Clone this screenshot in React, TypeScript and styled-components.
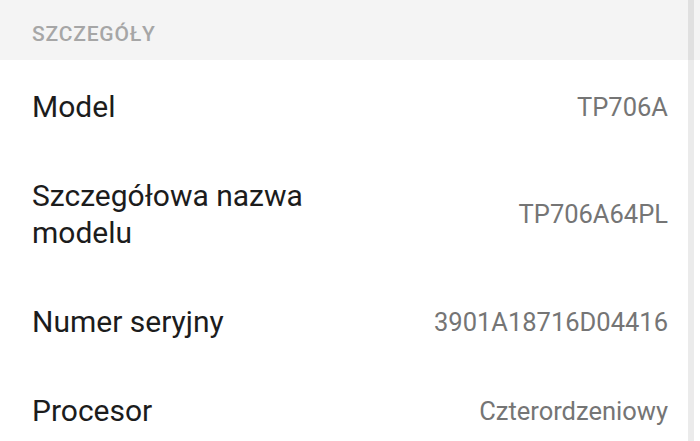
import React from "react";
import styled, { createGlobalStyle } from "styled-components";

const Global = createGlobalStyle`
  html, body { margin: 0; padding: 0; background: #ffffff; }
  body { font-family: Roboto, "Noto Sans", sans-serif; -webkit-font-smoothing: antialiased; }
`;

const Screen = styled.div`
  position: relative;
  width: 700px;
  height: 441px;
  overflow: hidden;
  background: #ffffff;
`;

const SectionHeader = styled.div`
  height: 60px;
  box-sizing: border-box;
  padding: 22px 32px 0 32px;
  background: #f4f4f4;
  color: #a6a6a6;
  font-size: 21px;
  line-height: 24px;
  font-weight: 500;
  letter-spacing: 0.8px;
`;

const List = styled.div`
  display: flex;
  flex-direction: column;
`;

const Row = styled.div`
  display: flex;
  align-items: center;
  justify-content: space-between;
  padding: 28px 32px 24px 32px;
`;

const Label = styled.div`
  max-width: 330px;
  color: #1c1c1c;
  font-size: 30px;
  line-height: 37px;
`;

const Value = styled.div`
  color: #757575;
  font-size: 25.5px;
  line-height: 30px;
  text-align: right;
  white-space: nowrap;
`;

const Scrollbar = styled.div`
  position: absolute;
  top: 0;
  bottom: 0;
  left: 688px;
  width: 6px;
  background: rgba(0, 0, 0, 0.08);
`;

const items: [string, string][] = [
  ["Model", "TP706A"],
  ["Szczegółowa nazwa modelu", "TP706A64PL"],
  ["Numer seryjny", "3901A18716D04416"],
  ["Procesor", "Czterordzeniowy"],
];

export default function App() {
  return (
    <Screen>
      <Global />
      <SectionHeader>SZCZEGÓŁY</SectionHeader>
      <List>
        {items.map(([label, value]) => (
          <Row key={label}>
            <Label>{label}</Label>
            <Value>{value}</Value>
          </Row>
        ))}
      </List>
      <Scrollbar />
    </Screen>
  );
}
